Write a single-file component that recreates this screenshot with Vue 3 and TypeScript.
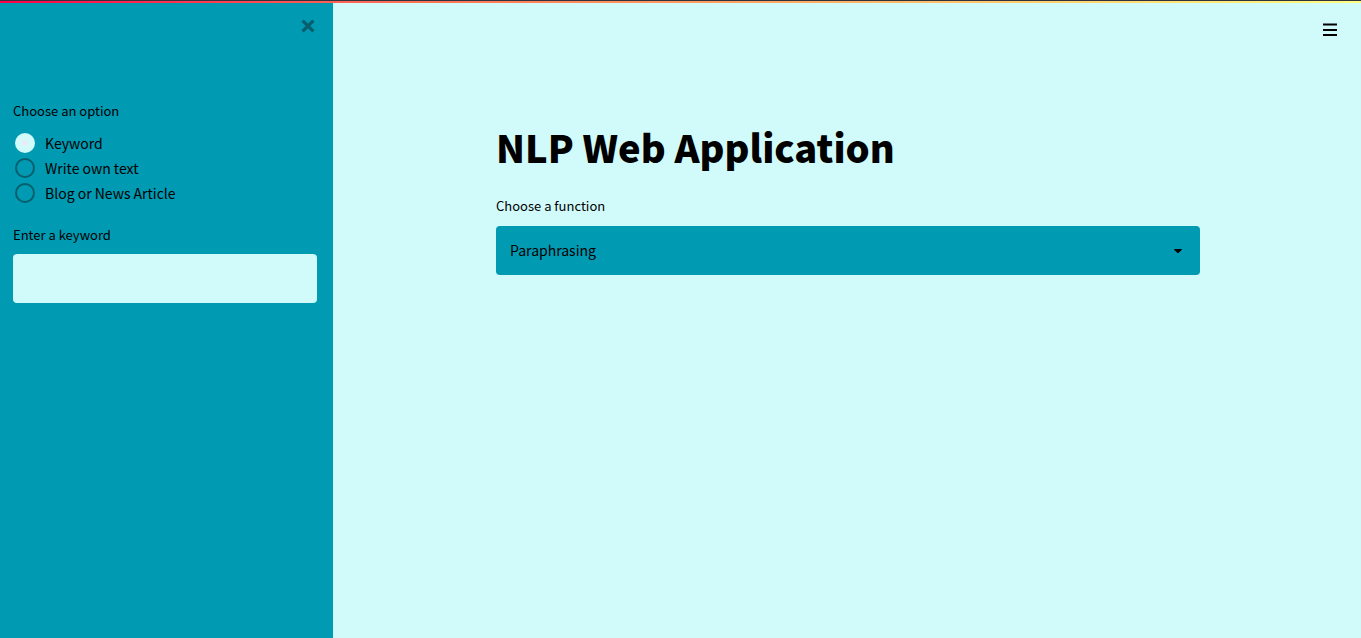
<script setup lang="ts">
import { ref } from 'vue'

const sources: string[] = ['Keyword', 'Write own text', 'Blog or News Article']
const functions: string[] = ['Paraphrasing']

const source = ref<string>('Keyword')
const keyword = ref<string>('')
const chosen = ref<string>('Paraphrasing')
const sidebarOpen = ref<boolean>(true)
</script>

<template>
  <div class="app">
    <div class="decoration"></div>
    <div class="body">
      <aside v-if="sidebarOpen" class="sidebar">
        <button class="icon-button close" type="button" aria-label="Close sidebar" @click="sidebarOpen = false">
          <svg width="14" height="14" viewBox="0 0 14 14" aria-hidden="true">
            <path d="M1.6 1.6 L12.4 12.4 M12.4 1.6 L1.6 12.4" fill="none" stroke="currentColor" stroke-width="3.3" />
          </svg>
        </button>
        <fieldset class="group">
          <legend class="label">Choose an option</legend>
          <label v-for="item in sources" :key="item" class="option">
            <input v-model="source" class="radio" type="radio" name="source" :value="item" />
            <span>{{ item }}</span>
          </label>
        </fieldset>
        <label class="label" for="keyword">Enter a keyword</label>
        <input id="keyword" v-model="keyword" class="text-field" type="text" />
      </aside>
      <main class="main">
        <header class="toolbar">
          <button class="icon-button" type="button" aria-label="Menu">
            <svg width="14" height="14" viewBox="0 0 14 14" aria-hidden="true">
              <path d="M0 1.5 H14 M0 7 H14 M0 12 H14" fill="none" stroke="currentColor" stroke-width="1.8" />
            </svg>
          </button>
        </header>
        <section class="content">
          <h1 class="title">NLP Web Application</h1>
          <label class="label" for="function">Choose a function</label>
          <div class="select-wrap">
            <select id="function" v-model="chosen" class="select">
              <option v-for="item in functions" :key="item" :value="item">{{ item }}</option>
            </select>
            <svg class="caret" width="8" height="4" viewBox="0 0 8 4" aria-hidden="true">
              <path d="M0.4 0 H7.6 Q8.2 0.3 7.6 0.9 L4.8 3.7 Q4 4.3 3.2 3.7 L0.4 0.9 Q-0.2 0.3 0.4 0 Z" fill="currentColor" />
            </svg>
          </div>
        </section>
      </main>
    </div>
  </div>
</template>

<style>
body {
  background: #d1fbfb;
}
</style>

<style scoped>
.app {
  display: flex;
  flex-direction: column;
  min-height: 100vh;
  color: #000;
  font-family: "Noto Sans CJK SC", "Noto Sans", sans-serif;
  font-size: 14px;
}
.app * {
  box-sizing: border-box;
}
.decoration {
  height: 3px;
  border-top: 1px solid #31333f;
  background: linear-gradient(90deg, #ff004d, #ff6a55 27%, #ffb266 62%, #fffd80);
}
.body {
  display: flex;
  flex: 1;
}
.sidebar {
  display: flex;
  flex-direction: column;
  flex: 0 0 333px;
  padding: 16px 16px 16px 13px;
  background: #009ab2;
}
.icon-button {
  display: flex;
  padding: 0;
  border: 0;
  background: none;
  color: inherit;
  cursor: pointer;
}
.close {
  align-self: flex-end;
  margin-right: 2px;
  margin-bottom: 68px;
  color: #075f6d;
}
.group {
  margin: 0 0 20px;
  padding: 0;
  border: 0;
}
.label {
  display: block;
  padding: 0;
  margin-bottom: 9px;
  font-size: 13px;
  line-height: 20px;
}
.option {
  display: flex;
  align-items: center;
  gap: 10px;
  padding-left: 2px;
  line-height: 24px;
  margin-top: 1px;
}
.radio {
  appearance: none;
  width: 20px;
  height: 20px;
  margin: 0;
  border: 2px solid #075f6d;
  border-radius: 50%;
}
.radio:checked {
  border: 0;
  background: radial-gradient(circle, #ebebf5 2px, #d1fbfb 4px);
}
.text-field,
.select {
  width: 100%;
  height: 49px;
  padding: 0 14px 2px;
  border: 0;
  border-radius: 4px;
  background: #d1fbfb;
  color: inherit;
  font: inherit;
}
.select {
  appearance: none;
  background: #009ab2;
}
.main {
  flex: 1;
  min-width: 0;
}
.toolbar {
  display: flex;
  justify-content: flex-end;
  padding: 20px 24px 0;
}
.content {
  max-width: 736px;
  margin: 0 auto;
  padding: 80px 15px 0 17px;
}
.content .label {
  margin-bottom: 10px;
}
.title {
  margin: 0 0 19px;
  font-size: 38px;
  font-weight: 900;
  line-height: 60px;
}
.select-wrap {
  position: relative;
}
.caret {
  position: absolute;
  top: 23px;
  right: 18px;
  pointer-events: none;
}
</style>
